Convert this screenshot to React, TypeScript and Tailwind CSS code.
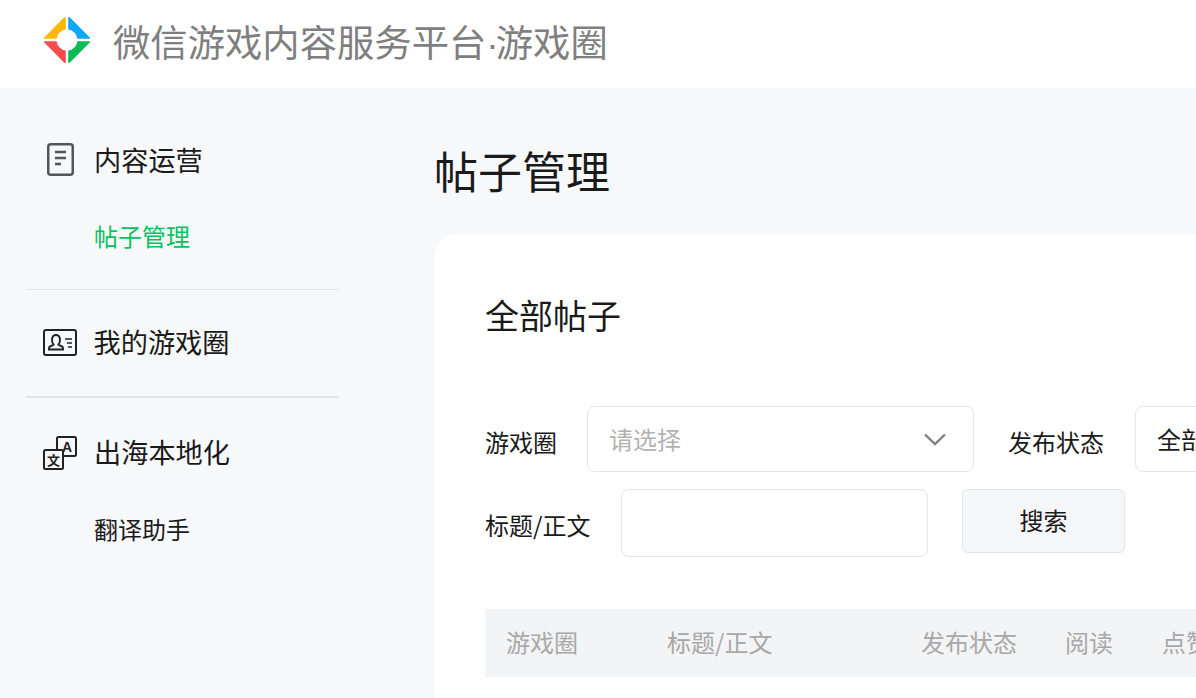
const font = { fontFamily: '"Noto Sans CJK SC", "Liberation Sans", sans-serif' };

function Logo() {
  return (
    <svg width="48" height="48" viewBox="0 0 48 48" className="shrink-0">
      <path d="M0.8 23 Q0.3 22.6 1 21.8 L21 1.6 Q22.8 0.2 22.8 2 V13.6 A10.5 10.5 0 0 0 13.6 22.8 H1.5 Z" fill="#fdb900" />
      <path d="M25.2 2 Q25.2 0.2 27 1.6 L47 21.8 Q47.7 22.6 46.5 22.8 H34.4 A10.5 10.5 0 0 0 25.2 13.6 Z" fill="#10a7f5" />
      <path d="M1.5 25.2 H13.6 A10.5 10.5 0 0 0 22.8 34.4 V46 Q22.8 47.8 21 46.4 L1 26.2 Q0.3 25.4 1.5 25.2 Z" fill="#fb4a4d" />
      <path d="M34.4 25.2 H46.5 Q47.7 25.4 47 26.2 L27 46.4 Q25.2 47.8 25.2 46 V34.4 A10.5 10.5 0 0 0 34.4 25.2 Z" fill="#0dba57" />
    </svg>
  );
}

function DocIcon() {
  return (
    <svg width="27" height="33" viewBox="0 0 27 33" fill="none" stroke="#555" className="mb-[2px] shrink-0">
      <rect x="1.25" y="1.25" width="24.5" height="30.5" rx="2.5" strokeWidth="2.5" />
      <path d="M8 9H19M8 15H19M8 21H14" strokeWidth="2.4" />
    </svg>
  );
}

function CardIcon() {
  return (
    <svg width="34" height="27" viewBox="0 0 34 27" fill="none" stroke="#222" className="shrink-0">
      <rect x="1" y="1" width="32" height="25" rx="2" strokeWidth="2" />
      <path d="M6 20.5 V19 Q6 17.5 8 17 L10.5 15.6 Q8.8 13.5 9 10 Q9.6 6 13 6 Q16.4 6 17 10 Q17.2 13.5 15.5 15.6 L18 17 Q20 17.5 20 19 V20.5 Z" strokeWidth="1.9" />
      <path d="M22 10H29M24 14H29M25 18H29" strokeWidth="1.7" />
    </svg>
  );
}

function TranslateIcon() {
  return (
    <svg width="34" height="34" viewBox="0 0 34 34" className="shrink-0">
      <rect x="14" y="1" width="19" height="19" rx="1.5" fill="none" stroke="#222" strokeWidth="2" />
      <text x="24" y="15.5" textAnchor="middle" fontSize="14" fontWeight="700" fill="#222" style={{ fontFamily: '"Liberation Sans", sans-serif' }}>A</text>
      <rect x="1" y="14" width="19" height="19" rx="1.5" fill="#f7f8fa" stroke="#222" strokeWidth="2" />
      <text x="10.5" y="28.5" textAnchor="middle" fontSize="13" fontWeight="700" fill="#222" style={font}>文</text>
    </svg>
  );
}

function Chevron() {
  return (
    <svg width="22" height="13" viewBox="0 0 22 13" fill="none" stroke="#808080" strokeWidth="2.4" className="shrink-0">
      <path d="M1 1.5 L11 11 L21 1.5" />
    </svg>
  );
}

export default function App() {
  return (
    <div className="h-[698px] w-[1196px] overflow-hidden bg-[#f7f8fa] text-[#1a1a1a]" style={font}>
      <header className="flex h-[88px] items-center gap-[22px] bg-white pb-[8px] pl-[43px]">
        <Logo />
        <span className="mt-[4px] whitespace-nowrap text-[37.33px] leading-[50px] text-[#7f7f7f]">
          微信游戏内容服务平台<span className="tracking-[-3px]" style={{ fontFamily: '"Liberation Sans", sans-serif' }}>·</span>游戏圈
        </span>
      </header>
      <div className="flex">
        <aside className="w-[434px] shrink-0 pl-[26px]">
          <div className="w-[313px]">
            <div className="box-content flex h-[54px] items-center pl-[21px] pt-[45px]">
              <DocIcon />
              <span className="mb-[2px] ml-[20px] text-[27.2px] leading-[36px]">内容运营</span>
            </div>
            <div className="pb-[33px] pl-[68px] pt-[29px] text-[24px] leading-[40px] text-[#07c160]">帖子管理</div>
            <div className="h-px bg-[#e3e4e6]" />
            <div className="flex h-[106px] items-center pb-[2px] pl-[17px]">
              <CardIcon />
              <span className="mb-[2px] ml-[16.5px] text-[27.2px] leading-[36px]">我的游戏圈</span>
            </div>
            <div className="h-[2px] bg-[#e3e4e6]" />
            <div className="flex h-[110px] items-center pl-[17px]">
              <TranslateIcon />
              <span className="mb-[4px] ml-[17px] text-[27.2px] leading-[36px]">出海本地化</span>
            </div>
            <div className="pl-[68px] pt-[1px] text-[24px] leading-[40px]">翻译助手</div>
          </div>
        </aside>
        <main className="w-[800px] shrink-0">
          <h1 className="pt-[52px] text-[44px] font-normal leading-[60px]">帖子管理</h1>
          <section className="mt-[34px] h-[500px] rounded-tl-[24px] bg-white pl-[51px]">
            <h2 className="pt-[57px] text-[34px] font-normal leading-[48px]">全部帖子</h2>
            <div className="mt-[67px] flex h-[66px] items-center">
              <span className="w-[102px] shrink-0 pt-[6px] text-[24px] leading-[32px]">游戏圈</span>
              <div className="flex h-[66px] w-[387px] shrink-0 items-center justify-between rounded-[8px] border border-[#e4e5e7] bg-white pl-[21px] pr-[27px]">
                <span className="text-[24px] leading-[32px] text-[#b2b2b2]">请选择</span>
                <Chevron />
              </div>
              <span className="ml-[34px] w-[127px] shrink-0 pt-[6px] text-[24px] leading-[32px]">发布状态</span>
              <div className="flex h-[66px] w-[300px] shrink-0 items-center rounded-[8px] border border-[#e4e5e7] bg-white pl-[21px]">
                <span className="text-[24px] leading-[32px]">全部</span>
              </div>
            </div>
            <div className="mt-[17px] flex items-start">
              <span className="w-[136px] pt-[20px] text-[24px] leading-[32px]">标题/正文</span>
              <div className="h-[68px] w-[307px] rounded-[8px] border border-[#e4e5e7] bg-white" />
              <button className="ml-[34px] h-[64px] w-[163px] rounded-[6px] border border-[#e4e5e7] bg-[#f5f6f7] pb-[2px] text-[24px] leading-[32px] text-[#1a1a1a]">搜索</button>
            </div>
            <div className="mt-[52px] flex h-[68px] items-center bg-[#f3f4f5] pb-[2px] text-[24px] leading-[32px] text-[#a8a8a8]">
              <span className="w-[182px] shrink-0 pl-[21px]">游戏圈</span>
              <span className="w-[254px] shrink-0">标题/正文</span>
              <span className="w-[144px] shrink-0">发布状态</span>
              <span className="w-[97px] shrink-0">阅读</span>
              <span className="shrink-0">点赞</span>
            </div>
          </section>
        </main>
      </div>
    </div>
  );
}
